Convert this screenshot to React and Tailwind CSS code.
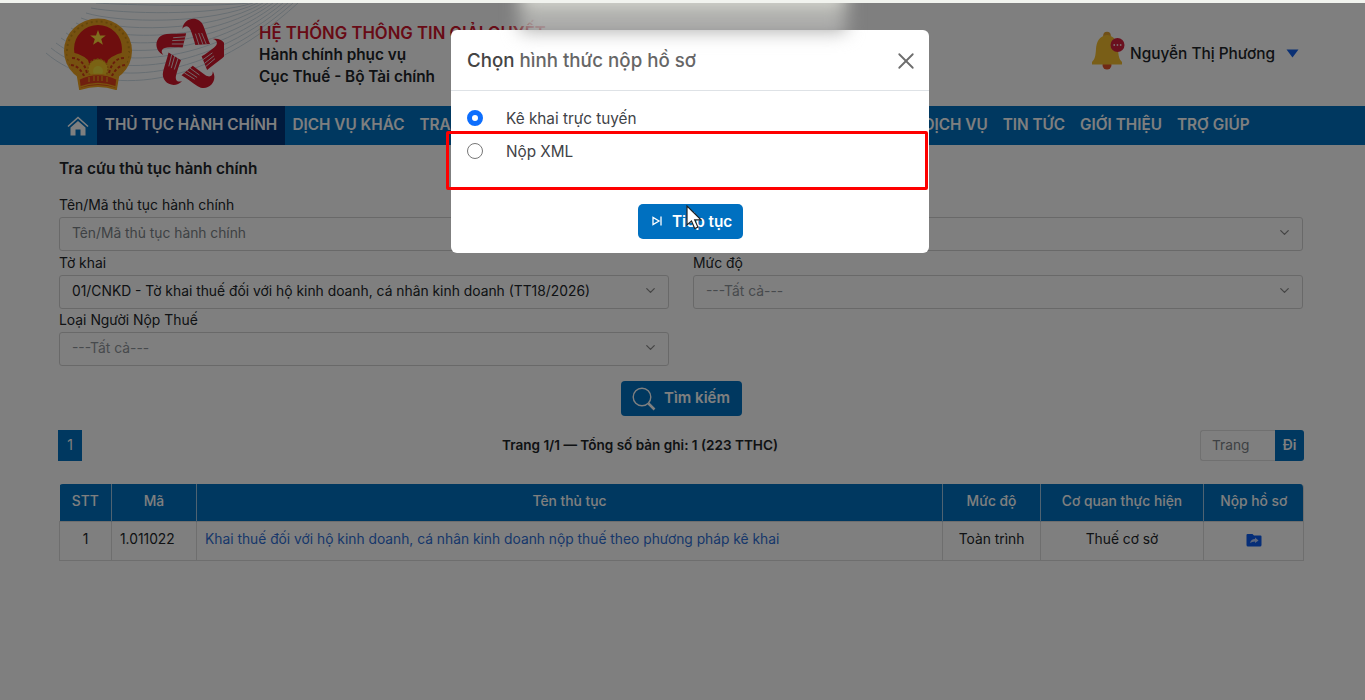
import { useState } from 'react';
import { ChevronDown, X } from 'lucide-react';

const leftMenu = ['DỊCH VỤ KHÁC', 'TRA CỨU'];
const rightMenu = ['DỊCH VỤ', 'TIN TỨC', 'GIỚI THIỆU', 'TRỢ GIÚP'];

const rows = [
    {
        code: '1.011022',
        name: 'Khai thuế đối với hộ kinh doanh, cá nhân kinh doanh nộp thuế theo phương pháp kê khai',
        level: 'Toàn trình',
        office: 'Thuế cơ sở'
    }
];

const Waves = () => (
    <svg className="absolute left-0 top-0" width="320" height="103" viewBox="0 0 320 103" fill="none">
        {[...Array(11)].map((_, i) => (
            <path
                key={i}
                d={`M${46 + i * 5} ${50 - i * 5} C ${95 + i * 3} ${92 - i * 9}, ${195 + i * 2} ${94 - i * 9}, ${298 - i * 5} 0`}
                stroke="#cfdde6"
                strokeWidth="1"
            />
        ))}
    </svg>
);

const Emblem = () => (
    <svg width="70" height="72" viewBox="0 0 70 72">
        <path d="M15 59 L55 59 L53 71 Q35 65 17 71Z" fill="#e23a1c" stroke="#f2a51e" strokeWidth="2" />
        <ellipse cx="35" cy="33" rx="34" ry="32.500" fill="#eda321" />
        <ellipse cx="35" cy="33" rx="31" ry="29.500" fill="none" stroke="#c98a17" strokeWidth="2" strokeDasharray="2 3" />
        <circle cx="35" cy="31" r="24" fill="#dc1c1c" />
        <path d="M4 34 Q16 34 25 42 L28 52 L42 52 L45 42 Q54 34 66 34 Q64 56 46 62 L24 62 Q6 56 4 34Z" fill="#eda321" />
        <path d="M9 40 Q20 40 24 55 M61 40 Q50 40 46 55 M8 47 Q17 48 22 60 M62 47 Q53 48 48 60" fill="none" stroke="#d13a18" strokeWidth="2" strokeDasharray="3 2" />
        <circle cx="35" cy="51" r="10" fill="#f4c426" stroke="#d98a18" strokeWidth="1.500" strokeDasharray="2 1.5" />
        <circle cx="35" cy="53" r="5" fill="#eedb3a" />
        <path d="M16 61 Q35 52 54 61 L53 69 Q35 62 17 69Z" fill="#e0401c" stroke="#f2a51e" strokeWidth="1.500" />
        <path d="M26 59v5 M31 58v5 M35 58v5 M39 58v5 M44 59v5" stroke="#f2a51e" strokeWidth="1.200" />
        <path d="M35 12l2 5.500h5.800l-4.600 3.600 1.700 5.700-4.900-3.400-4.900 3.400 1.700-5.700-4.600-3.600H33z" fill="#ffdc3c" />
    </svg>
);

const HandsLogo = () => (
    <svg width="68" height="74" viewBox="-104 -111 204 222">
        {[0, 72, 144, 216, 288].map((deg) => (
            <g key={deg} transform={`rotate(${deg})`}>
                <path
                    d="M-25 -78 C-22 -112 24 -122 38 -88 C45 -70 51 -50 58 -33 L14 -30 C10 -45 6 -58 0 -74 C-6 -90 -18 -90 -25 -78Z"
                    fill="#d3162b"
                />
                <path d="M14 -64L25 -30 M24 -66L37 -31 M33 -66L47 -32" stroke="#eadfe0" strokeWidth="2.500" />
            </g>
        ))}
    </svg>
);

const Bell = () => (
    <svg width="34" height="40" viewBox="0 0 34 40">
        <circle cx="16" cy="34" r="4.500" fill="#e2522b" />
        <circle cx="16" cy="4.500" r="3.800" fill="#e0a030" />
        <path d="M16 4 C8 5 5.500 11 5 18 C4.500 25 4 28 1 31 L1 33.500 H31 L31 31 C28 28 27.500 25 27 18 C26.500 11 24 5 16 4Z" fill="#f3bd2e" />
        <circle cx="26.500" cy="14" r="7" fill="#d4213d" />
        <path d="M22.500 14h1.500 M25.700 14h1.500 M28.900 14h1.500" stroke="#fff" strokeWidth="1.500" />
    </svg>
);

const HomeIcon = () => (
    <svg width="22" height="20" viewBox="0 0 22 20" fill="#fff">
        <path d="M11 5 L18.500 11.500 V19.500 H13.500 V13.500 H8.500 V19.500 H3.500 V11.500Z" />
        <path d="M1 10.500 L11 1.500 L21 10.500" fill="none" stroke="#fff" strokeWidth="1.600" />
    </svg>
);

const SelectBox = ({ label, value, filled, className }) => (
    <div className={className}>
        <label className="block h-6 text-[13.9px] leading-[24px]">{label}</label>
        <div className="flex h-[34px] items-center justify-between rounded-[3px] border border-[#d3d3d3] pl-3 pr-[10px] text-[13.85px]">
            <span className={filled ? 'mb-[2px] text-[#212529]' : 'mb-[2px] text-[#8f959a]'}>{value}</span>
            <ChevronDown className="mb-[3px] text-[#8a8a8a]" size={15} strokeWidth={2} />
        </div>
    </div>
);

const App = () => {
    const [type, setType] = useState('online');

    return (
        <div className="relative h-[700px] w-[1365px] overflow-hidden bg-white font-['Inter',sans-serif] text-[#212529]">
            <div className="h-[3px]"></div>

            {/* Header */}
            <header className="relative flex h-[103px] items-start bg-white">
                <Waves />
                <div className="relative ml-[63px] mt-[15px]">
                    <Emblem />
                </div>
                <div className="relative ml-[23px] mt-[15px]">
                    <HandsLogo />
                </div>
                <div className="relative ml-[35px] mt-[19px] whitespace-nowrap text-[15.3px] font-semibold leading-[22px]">
                    <div className="text-[16.7px] text-[#d0142c]">HỆ THỐNG THÔNG TIN GIẢI QUYẾT</div>
                    <div>Hành chính phục vụ</div>
                    <div>Cục Thuế - Bộ Tài chính</div>
                </div>
                <div className="ml-auto mr-[66px] mt-[28px] flex items-start">
                    <Bell />
                    <span className="ml-[5px] mt-[11px] text-[15.4px] font-medium leading-6">Nguyễn Thị Phương</span>
                    <svg className="ml-[11px] mt-[18px]" width="13" height="9" viewBox="0 0 13 9">
                        <path d="M0.500 0.500h12L6.500 8.500z" fill="#1560e8" />
                    </svg>
                </div>
            </header>

            {/* Menu */}
            <nav className="flex h-[39px] items-stretch whitespace-nowrap bg-[#0070c0] text-[15.3px] font-semibold leading-[37px] text-white">
                <div className="flex w-[97px] items-center pl-[67px]">
                    <HomeIcon />
                </div>
                <a className="w-[188px] bg-[#00347a] text-center">THỦ TỤC HÀNH CHÍNH</a>
                {leftMenu.map((item) => (
                    <a key={item} className="px-[7.500px]">{item}</a>
                ))}
                <div className="ml-auto mr-[108px] flex">
                    {rightMenu.map((item) => (
                        <a key={item} className="px-[7.500px]">{item}</a>
                    ))}
                </div>
            </nav>

            <main className="px-[59px] pt-[13px]">
                <h2 className="text-[15.4px] font-semibold leading-[22px]">Tra cứu thủ tục hành chính</h2>

                {/* Search form */}
                <div className="mt-[13px] grid w-[1244px] grid-cols-2 gap-x-6">
                    <div className="h-[58px]">
                        <label className="block h-6 text-[13.9px] leading-[24px]">Tên/Mã thủ tục hành chính</label>
                        <div className="flex h-[34px] items-center rounded-[3px] border border-[#d3d3d3] pb-[2px] pl-3 text-[13.8px] text-[#7d8388]">
                            Tên/Mã thủ tục hành chính
                        </div>
                    </div>
                    <SelectBox label="" value="" />
                    <SelectBox label="Tờ khai" value="01/CNKD - Tờ khai thuế đối với hộ kinh doanh, cá nhân kinh doanh (TT18/2026)" filled />
                    <SelectBox label="Mức độ" value="---Tất cả---" />
                    <SelectBox label="Loại Người Nộp Thuế" value="---Tất cả---" className="-mt-px" />
                </div>
                <button className="ml-[562px] mt-[15px] flex h-[35px] w-[121px] items-center rounded-[4px] bg-[#0070c0] pl-[11px] text-[15px] font-semibold text-white">
                    <svg width="24" height="24" viewBox="0 0 24 24" fill="none" stroke="#fff">
                        <circle cx="10" cy="10" r="8.800" strokeWidth="1.400" />
                        <path d="M16.500 16.500l6 6" strokeWidth="2.500" />
                    </svg>
                    <span className="ml-2 whitespace-nowrap">Tìm kiếm</span>
                </button>

                {/* Paging */}
                <div className="relative -ml-[1px] mt-[14px] flex h-[31px] w-[1246px] items-center justify-between text-[13.9px]">
                    <span className="flex h-[31px] w-[24px] items-center justify-center bg-[#0070c0] text-white">1</span>
                    <span className="absolute left-[444px] whitespace-nowrap text-[13.55px] font-semibold">Trang 1/1 — Tổng số bản ghi: 1 (223 TTHC)</span>
                    <div className="flex h-[31px]">
                        <span className="flex w-[75px] items-center rounded-l-[3px] border border-r-0 border-[#e0e0e0] pl-[11px] text-[13.7px] text-[#7d8388]">Trang</span>
                        <span className="flex w-[29px] items-center justify-center rounded-r-[3px] bg-[#0070c0] font-semibold text-white">Đi</span>
                    </div>
                </div>

                {/* Result table */}
                <div className="mt-[23px] w-[1245px] overflow-hidden rounded-t-[4px] border-r border-[#dcdcdc]">
                    <table className="w-full table-fixed border-collapse text-center text-[13.8px]">
                        <colgroup>
                            <col className="w-[52px]" />
                            <col className="w-[85px]" />
                            <col className="w-[746px]" />
                            <col className="w-[98px]" />
                            <col className="w-[163px]" />
                            <col className="w-[100px]" />
                        </colgroup>
                        <thead>
                            <tr className="h-[37px] bg-[#0070c0] text-white">
                                {['STT', 'Mã', 'Tên thủ tục', 'Mức độ', 'Cơ quan thực hiện', 'Nộp hồ sơ'].map((h) => (
                                    <th key={h} className="border-x border-[#9fc6e4] pb-px font-medium first:border-l-0 last:border-r-0">{h}</th>
                                ))}
                            </tr>
                        </thead>
                        <tbody>
                            {rows.map((row, i) => (
                                <tr key={row.code} className="h-[39px]">
                                    <td className="border border-[#dcdcdc] pb-[3px]">{i + 1}</td>
                                    <td className="border border-[#dcdcdc] pb-[3px] pl-2 text-left">{row.code}</td>
                                    <td className="whitespace-nowrap border border-[#dcdcdc] pb-[3px] pl-2 text-left text-[#2f6fd6]">{row.name}</td>
                                    <td className="border border-[#dcdcdc] pb-[3px]">{row.level}</td>
                                    <td className="border border-[#dcdcdc] pb-[3px]">{row.office}</td>
                                    <td className="border border-[#dcdcdc] pb-px">
                                        <svg className="mx-auto" width="16" height="14" viewBox="0 0 16 14">
                                            <path d="M1.500 1h5l1.500 1.500h6.500q1 0 1 1V12q0 1.500-1.500 1.500H2Q.5 13.500.5 12V2q0-1 1-1z" fill="#0d5df0" />
                                            <path d="M4 10q1-4 5-4V4.500L12.500 7.500 9 10V8.500Q6 8.500 4 10z" fill="#b9cdf8" />
                                        </svg>
                                    </td>
                                </tr>
                            ))}
                        </tbody>
                    </table>
                </div>
            </main>

            <div className="absolute inset-x-0 bottom-0 top-[3px] bg-black/50"></div>

            {/* Dialog */}
            <div className="absolute left-[451px] top-[30px] h-[223px] w-[478px] rounded-[6px] bg-white">
                <div className="flex h-[61px] items-center justify-between border-b border-[#dee2e6] pl-4 pr-[14px]">
                    <h5 className="mt-[2px] text-[18.7px] font-medium text-[#444]">
                        Chọn <span className="text-[#666]">hình thức nộp hồ sơ</span>
                    </h5>
                    <X className="mt-px text-[#6d6d6d]" size={18} strokeWidth={1.6} viewBox="4 4 16 16" />
                </div>
                <div className="flex flex-col gap-[9px] pl-4 pt-[15px] text-[15.3px] leading-6 text-[#3f4347]">
                    <label className="flex items-center" onClick={() => setType('online')}>
                        <span className={type === 'online' ? 'h-4 w-4 rounded-full border-[5px] border-[#0d6efd]' : 'h-4 w-4 rounded-full border border-[#777]'}></span>
                        <span className="-mb-px ml-[23px] mt-px">Kê khai trực tuyến</span>
                    </label>
                    <label className="flex items-center" onClick={() => setType('xml')}>
                        <span className={type === 'xml' ? 'h-4 w-4 rounded-full border-[5px] border-[#0d6efd]' : 'h-4 w-4 rounded-full border border-[#777]'}></span>
                        <span className="-mb-px ml-[23px] mt-px">Nộp XML</span>
                    </label>
                </div>
                <button className="ml-[187px] mt-[41px] flex h-[35px] w-[105px] items-center rounded-[5px] bg-[#0070c0] pl-[14px] text-[15.3px] font-semibold text-white">
                    <svg width="11" height="11" viewBox="0 0 11 11" fill="none" stroke="#fff" strokeWidth="1.300">
                        <path d="M1 1.500v7L7 5z M9 0.500v9" />
                    </svg>
                    <span className="ml-[9px] mt-[2px] whitespace-nowrap">Tiếp tục</span>
                </button>
            </div>

            {/* Blurred strip */}
            <div className="absolute left-[520px] top-[-14px] h-[47px] w-[326px] bg-linear-to-b from-[#dcded6] from-30% via-[#9c9c9a] via-65% to-[#cfcfcf] blur-[9px]"></div>
            <div className="absolute inset-x-0 top-0 h-[3px] bg-[#f1f3ee]"></div>

            {/* Highlighted option */}
            <div className="absolute left-[446px] top-[131px] h-[59px] w-[482px] rounded-[2px] border-3 border-[#fe0000]"></div>

            {/* Mouse pointer */}
            <svg className="absolute left-[686px] top-[205px]" width="16" height="25" viewBox="0 0 16 25">
                <path d="M1 1v19l4.500-4 3.200 7.500 3.200-1.400-3.200-7.200H15z" fill="#fff" stroke="#222" strokeWidth="1.200" />
            </svg>
        </div>
    );
};

export default App;
